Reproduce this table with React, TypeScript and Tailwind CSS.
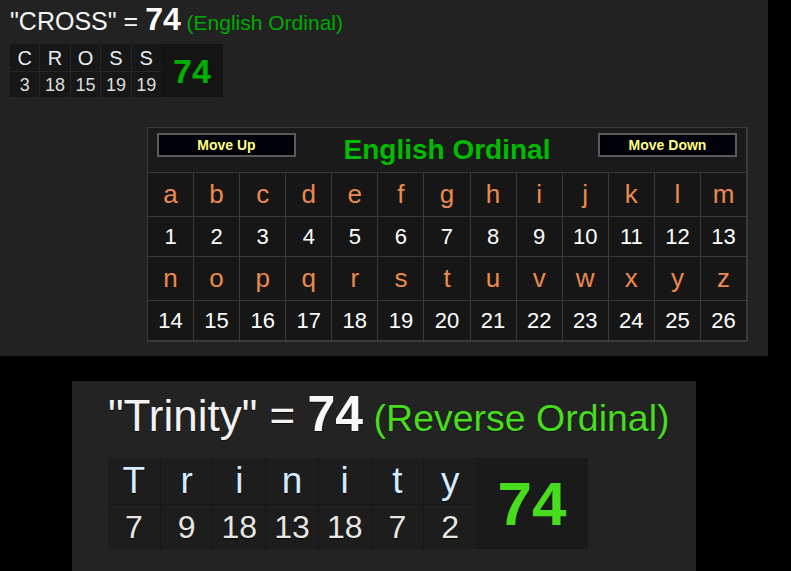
import React from "react";

const letters1 = "abcdefghijklm".split("");
const letters2 = "nopqrstuvwxyz".split("");

function Btn({ label }: { label: string }) {
  return (
    <div className="w-[139px] h-[24px] bg-[#00000a] border-2 border-[#5a5a5a] flex items-center justify-center text-[#ffff80] font-bold text-[14px] leading-none">
      {label}
    </div>
  );
}

export default function App() {
  const cross = [
    ["C", 3],
    ["R", 18],
    ["O", 15],
    ["S", 19],
    ["S", 19],
  ] as const;
  const trinity = [
    ["T", 7],
    ["r", 9],
    ["i", 18],
    ["n", 13],
    ["i", 18],
    ["t", 7],
    ["y", 2],
  ] as const;
  return (
    <div className="w-[791px] h-[571px] bg-black overflow-hidden flex flex-col [font-family:'Liberation_Sans',Arial,sans-serif]">
      {/* Top panel */}
      <div className="w-[768px] h-[356px] bg-[#222222] pl-[10px] flex flex-col shrink-0">
        <div className="flex items-baseline pt-[3px]">
          <span className="text-[25px] leading-none text-[#f4f4f4] whitespace-pre">"CROSS" = </span>
          <span className="text-[32px] leading-none font-bold text-white">74</span>
          <span className="text-[21px] leading-none text-[#00aa00] whitespace-pre"> (English Ordinal)</span>
        </div>
        <div className="mt-[9px] flex w-[213px] h-[53px] bg-[#141414]">
          <div className="w-[151px] grid grid-cols-5 grid-rows-[27px_25px] gap-px bg-[#262626]">
            {cross.map(([l], i) => (
              <div key={"l" + i} className="bg-[#171717] flex items-center justify-center text-[20px] text-[#e6eef6] leading-none">
                {l}
              </div>
            ))}
            {cross.map(([, n], i) => (
              <div key={"n" + i} className="bg-[#171717] flex items-center justify-center text-[18px] text-[#dddddd] leading-none">
                {n}
              </div>
            ))}
          </div>
          <div className="flex-1 flex items-center justify-center text-[34px] font-bold text-[#00b000] leading-none">
            74
          </div>
        </div>

        <div className="ml-[137px] mt-[30px] w-[601px] bg-[#3a3a3a] pt-px pl-px pr-[2px] pb-[2px]">
          <div className="grid grid-cols-13 gap-px grid-rows-[44px_43px_39px_43px_39px]">
            <div className="col-span-13 bg-[#1a1a1a] flex items-start justify-between px-[9px] pt-[5px]">
              <Btn label="Move Up" />
              <span className="text-[28px] font-bold text-[#00bb00] leading-none mt-[3px]">English Ordinal</span>
              <Btn label="Move Down" />
            </div>
            {letters1.map((l) => (
              <div key={l} className="bg-[#161616] flex items-center justify-center text-[26px] text-[#ec8a4e] leading-none pb-[1px]">
                {l}
              </div>
            ))}
            {letters1.map((l, i) => (
              <div key={"n" + l} className="bg-[#161616] flex items-center justify-center text-[22px] text-white leading-none">
                {i + 1}
              </div>
            ))}
            {letters2.map((l) => (
              <div key={l} className="bg-[#161616] flex items-center justify-center text-[26px] text-[#ec8a4e] leading-none pb-[1px]">
                {l}
              </div>
            ))}
            {letters2.map((l, i) => (
              <div key={"n" + l} className="bg-[#161616] flex items-center justify-center text-[22px] text-white leading-none">
                {i + 14}
              </div>
            ))}
          </div>
        </div>
      </div>

      {/* Bottom panel */}
      <div className="mt-[25px] ml-[72px] w-[624px] flex-1 bg-[#232323] pl-[36px] flex flex-col">
        <div className="flex items-baseline pt-[8px] [text-shadow:0_1px_1px_rgba(0,0,0,0.6)]">
          <span className="text-[44px] leading-none text-[#f2f2f2] whitespace-pre">"Trinity" = </span>
          <span className="text-[50px] leading-none font-bold text-[#f8f8f8]">74</span>
          <span className="text-[37.5px] leading-none text-[#48dc1e] whitespace-pre"> (Reverse Ordinal)</span>
        </div>
        <div className="mt-[19px] flex w-[480px] h-[91px] bg-[#1a1a1a]">
          <div className="w-[368px] grid grid-cols-7 grid-rows-[46px_44px] gap-px bg-[#161616]">
            {trinity.map(([l], i) => (
              <div key={"l" + i} className="bg-[#1d1d1d] flex items-center justify-center text-[37px] text-[#d4ecff] leading-none pb-[2px] [text-shadow:0_1px_1px_rgba(0,0,0,0.8)]">
                {l}
              </div>
            ))}
            {trinity.map(([, n], i) => (
              <div key={"n" + i} className="bg-[#1d1d1d] flex items-center justify-center text-[32px] text-[#e8e6e2] leading-none [text-shadow:0_1px_1px_rgba(0,0,0,0.8)]">
                {n}
              </div>
            ))}
          </div>
          <div className="flex-1 flex items-center justify-center text-[62px] font-bold text-[#48dc1e] leading-none">
            74
          </div>
        </div>
      </div>
    </div>
  );
}
